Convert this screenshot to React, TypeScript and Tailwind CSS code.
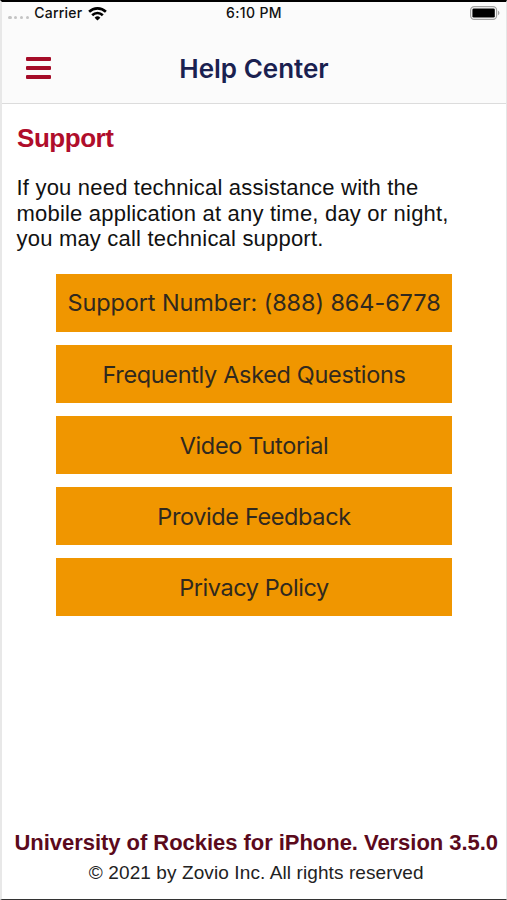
interface HelpLink {
  id: string
  label: string
  tracking: string
}

const links: HelpLink[] = [
  { id: 'phone', label: 'Support Number: (888) 864-6778', tracking: 'tracking-[-0.1px]' },
  { id: 'faq', label: 'Frequently Asked Questions', tracking: 'tracking-[-0.34px]' },
  { id: 'video', label: 'Video Tutorial', tracking: 'tracking-[-0.33px]' },
  { id: 'feedback', label: 'Provide Feedback', tracking: 'tracking-[-0.38px]' },
  { id: 'privacy', label: 'Privacy Policy', tracking: 'tracking-[-0.43px]' },
]

function WifiIcon() {
  return (
    <svg width="19" height="15" viewBox="0 0 19 15" fill="none" stroke="#000" strokeWidth="2.6">
      <path d="M1.1 5.8a12 12 0 0 1 16.8 0" />
      <path d="M4.2 9.2a7.6 7.6 0 0 1 10.6 0" />
      <path d="M9.5 14.6 6.6 11.7a4.2 4.2 0 0 1 5.8 0Z" fill="#000" stroke="none" />
    </svg>
  )
}

function BatteryIcon() {
  return (
    <svg width="30" height="14" viewBox="0 0 30 14" fill="none">
      <rect x="0.6" y="0.6" width="26" height="12.8" rx="3.6" stroke="#a3a3a3" strokeWidth="1.2" />
      <rect x="2.4" y="2.4" width="22.4" height="9.2" rx="1.4" fill="#000" />
      <path d="M28 4.8c1.9.7 1.9 3.7 0 4.4Z" fill="#a3a3a3" />
    </svg>
  )
}

function StatusBar() {
  return (
    <div className="grid h-[22px] grid-cols-3 items-center pr-[6px] pl-[6px] text-[14px] font-medium leading-[20px] text-[#111]">
      <div className="flex items-center">
        <div className="mt-[9px] flex gap-[2.4px]">
          {[0, 1, 2, 3].map((dot) => (
            <span key={dot} className="size-[3.5px] rounded-full bg-[#c4c4c4]" />
          ))}
        </div>
        <span className="ml-[5px] tracking-[0.25px]">Carrier</span>
        <span className="ml-[5px]">
          <WifiIcon />
        </span>
      </div>
      <span className="text-center tracking-[0.35px]">6:10 PM</span>
      <div className="flex justify-end">
        <BatteryIcon />
      </div>
    </div>
  )
}

export default function App() {
  return (
    <div className="flex h-[900px] w-[507px] flex-col overflow-hidden border-t-2 border-r border-b border-l-2 border-t-black border-r-[#e6e6e6] border-b-[#333] border-l-[#e8e8e8] bg-white font-['Inter',sans-serif]">
      <header className="h-[102px] shrink-0 border-b border-[#dcdcdc] bg-[#fbfbfb]">
        <StatusBar />
        <div className="grid h-[88px] grid-cols-[60px_1fr_60px] items-center">
          <button className="ml-6 flex w-[25px] flex-col gap-[5px]" aria-label="Menu">
            <span className="h-[4px] w-full rounded-[1px] bg-[#a50c28]" />
            <span className="h-[4px] w-full rounded-[1px] bg-[#a50c28]" />
            <span className="h-[4px] w-full rounded-[1px] bg-[#a50c28]" />
          </button>
          <h1 className="text-center text-[26px] font-semibold text-[#1a2150]">Help Center</h1>
        </div>
      </header>

      <main className="flex-1 font-['Liberation_Sans',sans-serif]">
        <h2 className="mt-[18px] ml-[15px] text-[26px] leading-[32px] font-bold tracking-[-0.45px] text-[#b00d2b]">Support</h2>
        <p className="mt-[21px] ml-[14.5px] text-[22px] leading-[25.7px] tracking-[0.2px] whitespace-nowrap text-[#111]">
          If you need technical assistance with the
          <br />
          mobile application at any time, day or night,
          <br />
          you may call technical support.
        </p>

        <div className="mt-[21.4px] ml-[54px] flex w-[396px] flex-col gap-[13px] font-['Inter',sans-serif]">
          {links.map((link) => (
            <button key={link.id} className="h-[58.2px] bg-[#f09600] pt-[1px] text-center text-[23.5px] whitespace-nowrap text-[#30291f]">
              <span className={link.tracking}>{link.label}</span>
            </button>
          ))}
        </div>
      </main>

      <footer className="h-[71px] pl-[4.5px] text-center font-['Liberation_Sans',sans-serif] whitespace-nowrap">
        <p className="text-[22px] leading-[30px] font-bold tracking-[-0.04px] text-[#5b0a1c]">University of Rockies for iPhone. Version 3.5.0</p>
        <p className="text-[19px] leading-[30px] tracking-[0.1px] text-[#222]">© 2021 by Zovio Inc. All rights reserved</p>
      </footer>
    </div>
  )
}
